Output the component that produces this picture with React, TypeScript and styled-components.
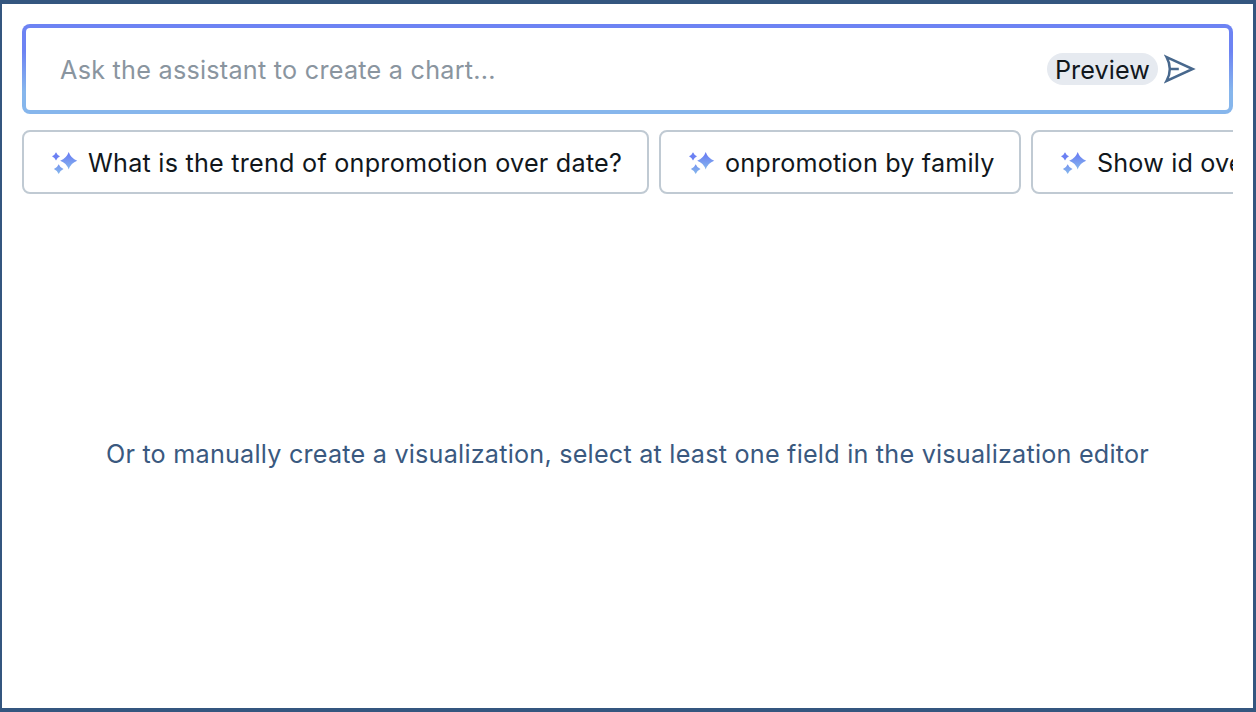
import React from "react";
import styled, { createGlobalStyle } from "styled-components";

const GlobalStyle = createGlobalStyle`
  * { box-sizing: border-box; }
  body { margin: 0; background: #fff; }
`;

const Frame = styled.main`
  width: 1256px;
  height: 712px;
  padding: 20px;
  border: solid #34567f;
  border-width: 4px 3px 4px 2px;
  background: #fff;
  display: flex;
  flex-direction: column;
  overflow: hidden;
  font-family: Inter, "Liberation Sans", sans-serif;
  font-size: 25.2px;
  line-height: 32px;
  letter-spacing: 0.22px;
  color: #11171c;
`;

const PromptBar = styled.div`
  flex: none;
  height: 90px;
  padding: 0 33px 0 34px;
  border: 4px solid transparent;
  border-radius: 8px;
  background:
    linear-gradient(#fff, #fff) padding-box,
    linear-gradient(180deg, #6d83f3 30%, #86b6ec 75%) border-box;
  display: flex;
  align-items: center;
`;

const PromptInput = styled.input`
  flex: 1;
  min-width: 0;
  height: 34px;
  padding: 2px 0 0;
  border: 0;
  outline: 0;
  background: transparent;
  font: inherit;
  letter-spacing: 0.25px;
  &::placeholder { color: #8a959f; opacity: 1; }
`;

const Tag = styled.span`
  width: 111px;
  height: 32px;
  border-radius: 16px;
  background: #e6eaf0;
  line-height: 34px;
  text-align: center;
  letter-spacing: 0.1px;
`;

const SendButton = styled.button`
  width: 32px;
  height: 32px;
  margin-left: 6px;
  padding: 0;
  border: 0;
  background: none;
  display: flex;
`;

const Suggestions = styled.div`
  flex: none;
  display: flex;
  gap: 10px;
  margin-top: 16px;
  overflow: hidden;
`;

const Suggestion = styled.button<{ $width: number }>`
  flex: none;
  width: ${(p) => p.$width}px;
  height: 64px;
  padding: 0 0 0 26px;
  border: 2px solid #c0cad3;
  border-radius: 8px;
  background: #fff;
  display: flex;
  align-items: center;
  gap: 8px;
  font: inherit;
  letter-spacing: inherit;
  color: inherit;
  white-space: nowrap;
`;

const SuggestionText = styled.span<{ $spacing: number }>`
  padding-top: 2px;
  letter-spacing: ${(p) => p.$spacing}px;
`;

const EmptyState = styled.div`
  flex: 1;
  display: flex;
  align-items: center;
  justify-content: center;
  padding-top: 26px;
  color: #3a597f;
  white-space: nowrap;
`;

const Sparkles = () => (
  <svg width="30" height="30" viewBox="0 0 30 30" fill="none">
    <defs>
      <linearGradient id="spark" x1="0" y1="0" x2="0" y2="1">
        <stop offset="0.15" stopColor="#6b80f3" />
        <stop offset="1" stopColor="#86b8ec" />
      </linearGradient>
      <linearGradient id="sparkLow" x1="0" y1="0" x2="0" y2="1">
        <stop stopColor="#7593f0" />
        <stop offset="1" stopColor="#86b8ec" />
      </linearGradient>
    </defs>
    <path fill="url(#spark)" d="M18.7 5 Q20.9 11.4 27.2 13.7 Q20.9 16 18.7 22.4 Q16.5 16 10.2 13.7 Q16.5 11.4 18.7 5Z" />
    <path fill="#6b80f3" d="M6 5.2 Q7.2 8.1 10 9.3 Q7.2 10.5 6 13.4 Q4.8 10.5 2 9.3 Q4.8 8.1 6 5.2Z" />
    <path fill="url(#sparkLow)" d="M8.7 17.2 Q10.1 20.7 13.5 22.1 Q10.1 23.5 8.7 27 Q7.3 23.5 3.9 22.1 Q7.3 20.7 8.7 17.2Z" />
  </svg>
);

const SendIcon = () => (
  <svg width="32" height="32" viewBox="0 0 32 32" fill="none" stroke="#48688d" strokeWidth="2.5">
    <path d="M2.6 4.1 28.7 16 2.6 27.9Q5.8 22 5.8 16T2.6 4.1Z" />
    <path d="M6 16h8.8" />
  </svg>
);

const suggestions = [
  { text: "What is the trend of onpromotion over date?", width: 627, spacing: 0.23 },
  { text: "onpromotion by family", width: 362, spacing: 0.17 },
  { text: "Show id over date", width: 310, spacing: 0.15 },
];

export default function App() {
  return (
    <>
      <GlobalStyle />
      <Frame>
        <PromptBar>
          <PromptInput placeholder="Ask the assistant to create a chart..." />
          <Tag>Preview</Tag>
          <SendButton aria-label="Send">
            <SendIcon />
          </SendButton>
        </PromptBar>
        <Suggestions>
          {suggestions.map((s) => (
            <Suggestion key={s.text} $width={s.width}>
              <Sparkles />
              <SuggestionText $spacing={s.spacing}>{s.text}</SuggestionText>
            </Suggestion>
          ))}
        </Suggestions>
        <EmptyState>
          Or to manually create a visualization, select at least one field in the visualization editor
        </EmptyState>
      </Frame>
    </>
  );
}
